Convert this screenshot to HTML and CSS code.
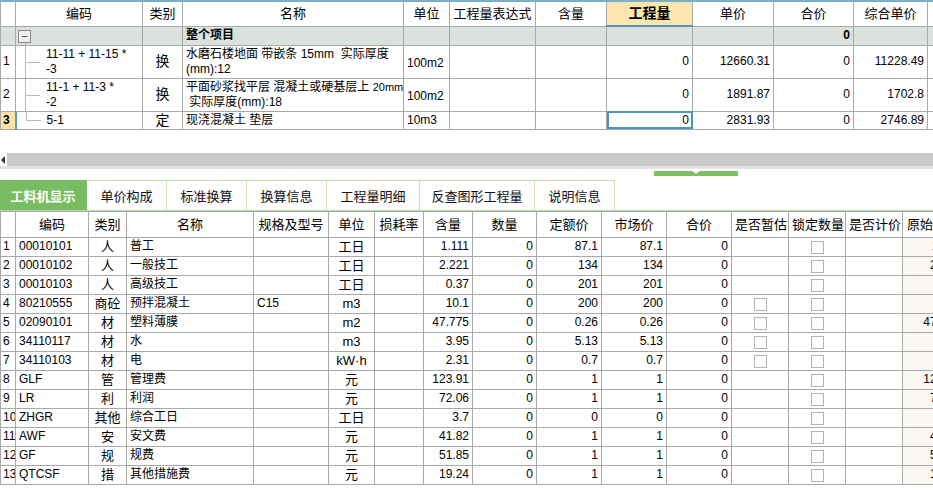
FILE: index.html
```html
<!DOCTYPE html>
<html lang="zh-CN">
<head>
    <meta charset="UTF-8">
    <title>工料机显示</title>
    <link rel="stylesheet" href="styles.css">
</head>
<body>
    <div class="page">
        <!-- 上部：清单/定额 -->
        <table class="grid top-grid">
            <colgroup>
                <col style="width:15px"><col style="width:127px"><col style="width:40px"><col style="width:221px">
                <col style="width:46px"><col style="width:86px"><col style="width:71px"><col style="width:86px">
                <col style="width:81px"><col style="width:80px"><col style="width:74px"><col style="width:60px">
            </colgroup>
            <tr class="head">
                <th></th><th>编码</th><th>类别</th><th>名称</th><th>单位</th><th>工程量表达式</th><th>含量</th>
                <th class="active-head">工程量</th><th>单价</th><th>合价</th><th>综合单价</th><th></th>
            </tr>
            <tr class="group">
                <td></td><td class="tree tree-root"><span class="fold">−</span></td><td></td><td class="bold">整个项目</td>
                <td></td><td></td><td></td><td></td><td></td><td class="num bold">0</td><td></td><td></td>
            </tr>
            <tr class="tall">
                <td class="rn">1</td><td class="tree tree-mid"><span class="code">11-11 + 11-15 *<br>-3</span></td><td class="c big">换</td>
                <td>水磨石楼地面 带嵌条 15mm&nbsp;&nbsp;实际厚度<br>(mm):12</td><td class="unit">100m2</td><td></td><td></td>
                <td class="num">0</td><td class="num">12660.31</td><td class="num">0</td><td class="num">11228.49</td><td></td>
            </tr>
            <tr class="tall">
                <td class="rn">2</td><td class="tree tree-mid"><span class="code">11-1 + 11-3 *<br>-2</span></td><td class="c big">换</td>
                <td>平面砂浆找平层 混凝土或硬基层上 <small>20mm</small><br>&nbsp;实际厚度(mm):18</td><td class="unit">100m2</td><td></td><td></td>
                <td class="num">0</td><td class="num">1891.87</td><td class="num">0</td><td class="num">1702.8</td><td></td>
            </tr>
            <tr class="short">
                <td class="rn current">3</td><td class="tree tree-end"><span class="code">5-1</span></td><td class="c big">定</td>
                <td>现浇混凝土 垫层</td><td>10m3</td><td></td><td></td>
                <td class="num selected">0</td><td class="num">2831.93</td><td class="num">0</td><td class="num">2746.89</td><td></td>
            </tr>
        </table>

        <div class="hscroll">
            <span class="arrow-left"></span>
            <div class="track"></div>
        </div>
        <div class="splitter"><span class="handle"></span></div>

        <div class="tabs">
            <span class="tab on">工料机显示</span>
            <span class="tab">单价构成</span>
            <span class="tab">标准换算</span>
            <span class="tab">换算信息</span>
            <span class="tab">工程量明细</span>
            <span class="tab w-115">反查图形工程量</span>
            <span class="tab">说明信息</span>
        </div>

        <!-- 下部：工料机 -->
        <table class="grid bottom-grid">
            <colgroup>
                <col style="width:15px"><col style="width:73px"><col style="width:38px"><col style="width:127px">
                <col style="width:75px"><col style="width:46px"><col style="width:49px"><col style="width:49px">
                <col style="width:64px"><col style="width:65px"><col style="width:65px"><col style="width:65px">
                <col style="width:57px"><col style="width:57px"><col style="width:57px"><col style="width:61px">
            </colgroup>
            <tr class="head">
                <th></th><th>编码</th><th>类别</th><th>名称</th><th>规格及型号</th><th>单位</th><th>损耗率</th><th>含量</th>
                <th>数量</th><th>定额价</th><th>市场价</th><th>合价</th><th>是否暂估</th><th>锁定数量</th><th>是否计价</th><th>原始含量</th>
            </tr>
            <tr><td class="rn">1</td><td>00010101</td><td class="c">人</td><td>普工</td><td></td><td class="c">工日</td><td></td><td class="num">1.111</td><td class="num">0</td><td class="num">87.1</td><td class="num">87.1</td><td class="num">0</td><td></td><td class="c"><span class="box"></span></td><td></td><td class="num orig">1.111</td></tr>
            <tr><td class="rn">2</td><td>00010102</td><td class="c">人</td><td>一般技工</td><td></td><td class="c">工日</td><td></td><td class="num">2.221</td><td class="num">0</td><td class="num">134</td><td class="num">134</td><td class="num">0</td><td></td><td class="c"><span class="box"></span></td><td></td><td class="num orig">2.221</td></tr>
            <tr><td class="rn">3</td><td>00010103</td><td class="c">人</td><td>高级技工</td><td></td><td class="c">工日</td><td></td><td class="num">0.37</td><td class="num">0</td><td class="num">201</td><td class="num">201</td><td class="num">0</td><td></td><td class="c"><span class="box"></span></td><td></td><td class="num orig">0.37</td></tr>
            <tr><td class="rn">4</td><td>80210555</td><td class="c">商砼</td><td>预拌混凝土</td><td>C15</td><td class="c">m3</td><td></td><td class="num">10.1</td><td class="num">0</td><td class="num">200</td><td class="num">200</td><td class="num">0</td><td class="c"><span class="box"></span></td><td class="c"><span class="box"></span></td><td></td><td class="num orig">10.1</td></tr>
            <tr><td class="rn">5</td><td>02090101</td><td class="c">材</td><td>塑料薄膜</td><td></td><td class="c">m2</td><td></td><td class="num">47.775</td><td class="num">0</td><td class="num">0.26</td><td class="num">0.26</td><td class="num">0</td><td class="c"><span class="box"></span></td><td class="c"><span class="box"></span></td><td></td><td class="num orig">47.775</td></tr>
            <tr><td class="rn">6</td><td>34110117</td><td class="c">材</td><td>水</td><td></td><td class="c">m3</td><td></td><td class="num">3.95</td><td class="num">0</td><td class="num">5.13</td><td class="num">5.13</td><td class="num">0</td><td class="c"><span class="box"></span></td><td class="c"><span class="box"></span></td><td></td><td class="num orig">3.95</td></tr>
            <tr><td class="rn">7</td><td>34110103</td><td class="c">材</td><td>电</td><td></td><td class="c">kW·h</td><td></td><td class="num">2.31</td><td class="num">0</td><td class="num">0.7</td><td class="num">0.7</td><td class="num">0</td><td class="c"><span class="box"></span></td><td class="c"><span class="box"></span></td><td></td><td class="num orig">2.31</td></tr>
            <tr><td class="rn">8</td><td>GLF</td><td class="c">管</td><td>管理费</td><td></td><td class="c">元</td><td></td><td class="num">123.91</td><td class="num">0</td><td class="num">1</td><td class="num">1</td><td class="num">0</td><td></td><td class="c"><span class="box"></span></td><td></td><td class="num orig">123.91</td></tr>
            <tr><td class="rn">9</td><td>LR</td><td class="c">利</td><td>利润</td><td></td><td class="c">元</td><td></td><td class="num">72.06</td><td class="num">0</td><td class="num">1</td><td class="num">1</td><td class="num">0</td><td></td><td class="c"><span class="box"></span></td><td></td><td class="num orig">72.06</td></tr>
            <tr><td class="rn">10</td><td>ZHGR</td><td class="c">其他</td><td>综合工日</td><td></td><td class="c">工日</td><td></td><td class="num">3.7</td><td class="num">0</td><td class="num">0</td><td class="num">0</td><td class="num">0</td><td></td><td class="c"><span class="box"></span></td><td></td><td class="num orig">3.7</td></tr>
            <tr><td class="rn">11</td><td>AWF</td><td class="c">安</td><td>安文费</td><td></td><td class="c">元</td><td></td><td class="num">41.82</td><td class="num">0</td><td class="num">1</td><td class="num">1</td><td class="num">0</td><td></td><td class="c"><span class="box"></span></td><td></td><td class="num orig">41.82</td></tr>
            <tr><td class="rn">12</td><td>GF</td><td class="c">规</td><td>规费</td><td></td><td class="c">元</td><td></td><td class="num">51.85</td><td class="num">0</td><td class="num">1</td><td class="num">1</td><td class="num">0</td><td></td><td class="c"><span class="box"></span></td><td></td><td class="num orig">51.85</td></tr>
            <tr><td class="rn">13</td><td>QTCSF</td><td class="c">措</td><td>其他措施费</td><td></td><td class="c">元</td><td></td><td class="num">19.24</td><td class="num">0</td><td class="num">1</td><td class="num">1</td><td class="num">0</td><td></td><td class="c"><span class="box"></span></td><td></td><td class="num orig">19.24</td></tr>
        </table>
    </div>
</body>
</html>
```

FILE: styles.css
```css
body {
    margin: 0;
    background: #fff;
    overflow: hidden;
    font-family: "Liberation Sans", "Noto Sans CJK SC", sans-serif;
    font-size: 12px;
    color: #000;
}

.page {
    width: 933px;
    height: 496px;
    overflow: hidden;
}

/* --- Grids --- */
.grid {
    border-collapse: collapse;
    table-layout: fixed;
}

.grid th,
.grid td {
    border: 1px solid #a9a9a9;
    padding: 0 3px;
    white-space: nowrap;
    overflow: hidden;
    font-weight: normal;
    line-height: 15px;
}

.grid th {
    font-size: 13px;
    text-align: center;
}

.grid td.c { text-align: center; }
.grid td.num { text-align: right; }
.grid td.rn { padding-left: 2px; text-align: left; }
.grid .bold { font-weight: bold; }

.top-grid {
    border-top: 2px solid #7aaecb;
    width: 987px; /* wider than the window, last column is clipped */
}

.top-grid .head { height: 25px; }
.top-grid .group { height: 19px; background: #dbe2de; }
.top-grid .tall { height: 33px; }
.top-grid .short { height: 18px; }

.top-grid td { vertical-align: middle; }
.top-grid td.unit { padding-top: 4px; }
.top-grid .big { font-size: 14px; }
.top-grid small { font-size: 11px; }

.top-grid th.active-head {
    background: #fde6ad;
    font-weight: bold;
    font-size: 14px;
    border-bottom: 2px solid #4f93b8;
}

.top-grid td.current {
    background: #fbe3a3;
    font-weight: bold;
    border-right: 2px solid #5aa0c4;
}

.top-grid td.selected {
    outline: 2px solid #4f93b8;
    outline-offset: -2px;
}

/* tree lines in the code column */
.tree {
    position: relative;
    padding-left: 30px !important;
}

.tree::before,
.tree::after {
    content: '';
    position: absolute;
    border-color: #b8b8b8;
    border-style: solid;
    border-width: 0;
}

.tree-mid::before { left: 9px; top: 0; bottom: 0; border-left-width: 1px; }
.tree-end::before { left: 9px; top: 0; height: 50%; border-left-width: 1px; }
.tree-mid::after,
.tree-end::after { left: 9px; width: 15px; top: 50%; border-top-width: 1px; }
.tree-root::before { left: 9px; top: 15px; bottom: 0; border-left-width: 1px; }

.fold {
    position: absolute;
    left: 2px;
    top: 3px;
    width: 11px;
    height: 11px;
    border: 1px solid #888;
    background: #eef0ee;
    font-size: 11px;
    line-height: 10px;
    text-align: center;
    color: #333;
}

/* --- Horizontal scroll bar and splitter --- */
.hscroll {
    display: flex;
    margin-top: 23px;
    height: 13px;
    border-bottom: 3px solid #e3e3e3;
}

.arrow-left {
    width: 7px;
    background: #fff;
    position: relative;
}

.arrow-left::before {
    content: '';
    position: absolute;
    left: 1px;
    top: 3px;
    border-right: 4px solid #333;
    border-top: 4px solid transparent;
    border-bottom: 4px solid transparent;
}

.track {
    flex: 1;
    background: #c9c9c9;
}

.splitter {
    height: 11px;
    padding-top: 2px;
    box-sizing: border-box;
}

.handle {
    display: block;
    margin-left: 654px;
    width: 84px;
    height: 5px;
    background: #7cbe66;
    position: relative;
}

.handle::after {
    content: '';
    position: absolute;
    left: 38px;
    top: 0;
    border-top: 3px solid #e8f4e2;
    border-left: 4px solid transparent;
    border-right: 4px solid transparent;
}

/* --- Tabs --- */
.tabs {
    display: flex;
    height: 30px;
    border-bottom: 1px solid #b2d6a4;
}

.tab {
    width: 79px;
    border-right: 1px solid #c8e2bd;
    border-top: 1px solid #c8e2bd;
    font-family: "Noto Sans CJK SC", sans-serif;
    font-size: 13px;
    display: flex;
    align-items: center;
    justify-content: center;
    color: #111;
}

.tab.on {
    width: 86px;
    background: #79bd62;
    color: #fff;
    font-weight: bold;
    border-color: #79bd62;
}

.tab:nth-child(5) { width: 92px; }
.tab.w-115 { width: 114px; }

/* --- Bottom grid --- */
.bottom-grid {
    width: 963px; /* wider than the window, last column is clipped */
}

.bottom-grid .head { height: 26px; }
.bottom-grid tr { height: 19px; }
.bottom-grid td { vertical-align: middle; }
.bottom-grid td.c { font-size: 13px; }
.bottom-grid td.orig { background: #fcf8f3; }

.box {
    display: inline-block;
    width: 11px;
    height: 11px;
    border: 1px solid #b4b4b4;
    background: #fff;
    vertical-align: middle;
}
```
